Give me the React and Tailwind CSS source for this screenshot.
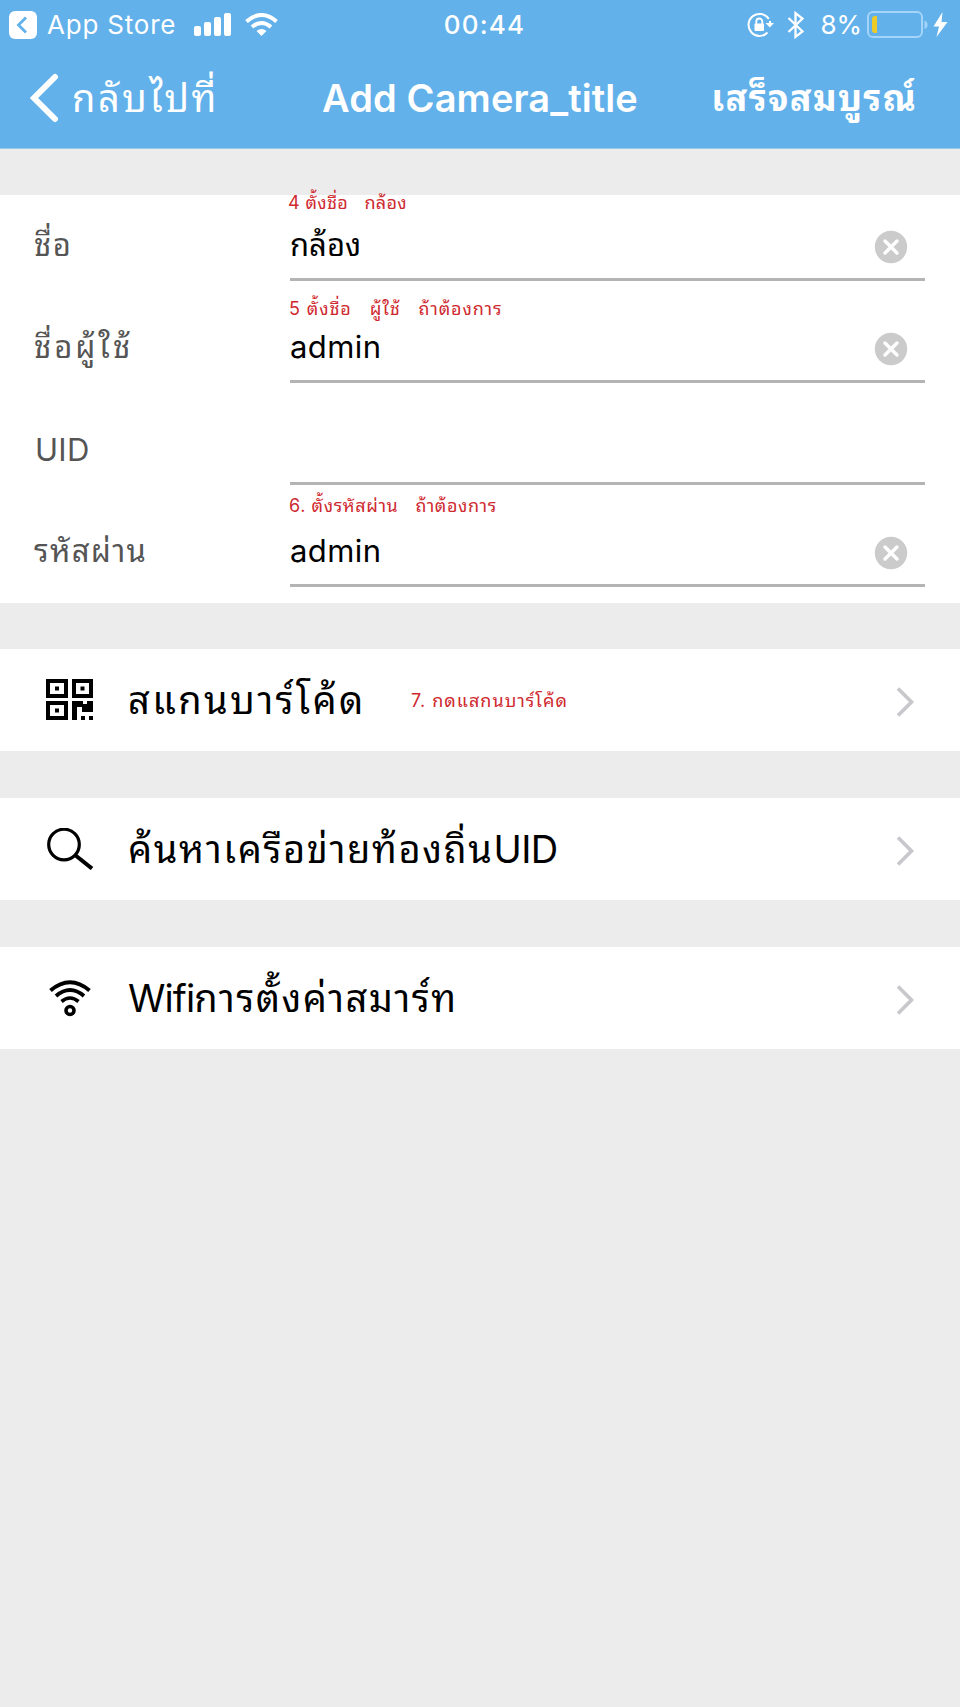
import React from "react";

const fields = [
  { label: "ชื่อ", labelClass: "-ml-px tracking-[1.5px]", value: "กล้อง", clear: true, note: "4 ตั้งชื่อ   กล้อง", noteClass: "left-[288px] -top-[6px] tracking-[0.35px]" },
  { label: "ชื่อผู้ใช้", labelClass: "-ml-px tracking-[3px]", value: "admin", clear: true, note: "5 ตั้งชื่อ   ผู้ใช้   ถ้าต้องการ", noteClass: "left-[289px] -top-[2px] tracking-[0.9px]" },
  { label: "UID", labelClass: "mt-px tracking-[0.3px]", value: "", clear: false },
  { label: "รหัสผ่าน", labelClass: "-ml-px tracking-[1.3px]", value: "admin", clear: true, note: "6. ตั้งรหัสผ่าน   ถ้าต้องการ", noteClass: "left-[289px] -top-[9px] tracking-[0.6px]" },
];

const ClearIcon = () => (
  <svg width="34" height="34" viewBox="0 0 34 34">
    <circle cx="17" cy="17" r="16.2" fill="#cbcbcb" />
    <path d="M11 11l12 12M23 11L11 23" stroke="#fff" strokeWidth="3.4" strokeLinecap="round" />
  </svg>
);

const Chevron = () => (
  <svg className="mt-[4px]" width="20" height="32" viewBox="0 0 20 32" fill="none">
    <path d="M2 2.5L15.500 16L2 29.500" stroke="#c7c7cc" strokeWidth="3.600" />
  </svg>
);

const QrIcon = () => (
  <svg width="48" height="42" viewBox="0 0 48 42" fill="#000">
    <path fillRule="evenodd" d="M0 0h22v19H0zM4 4v11h14V4zM9 7.5h4v4H9z" />
    <path fillRule="evenodd" d="M26 0h21v19H26zM30 4v11h13V4zM34.500 7.500h4v4h-4z" />
    <path fillRule="evenodd" d="M0 22h22v19H0zM4 26v11h14V26zM9 29.500h4v4H9z" />
    <path d="M26 22h11v3h4v-3h6v11H36v-5h-5v13h-5zM35 37h4v4h-4zM43 37h4v4h-4z" />
  </svg>
);

const SearchIcon = () => (
  <svg width="48" height="42" viewBox="0 0 48 42" fill="none" stroke="#000">
    <circle cx="18" cy="16.500" r="15.300" strokeWidth="3.200" />
    <path d="M29 27L46 40.500" strokeWidth="4" />
  </svg>
);

const WifiIcon = () => (
  <svg width="48" height="42" viewBox="0 0 48 42" fill="none" stroke="#000">
    <path d="M4.500 13.500Q24 -3 43.500 13.500" strokeWidth="4" />
    <path d="M10 19Q24 7 38 19" strokeWidth="3.800" />
    <path d="M15.500 24.500Q24 17.500 32.500 24.500" strokeWidth="3.600" />
    <circle cx="24" cy="33.500" r="4" strokeWidth="3.600" />
  </svg>
);

const actions = [
  { id: "scan", title: <span className="tracking-[2.4px]">สแกนบาร์โค้ด</span>, icon: QrIcon, note: "7. กดแสกนบาร์โค้ด" },
  { id: "search", title: <><span className="tracking-[1.6px]">ค้นหาเครือข่ายท้องถิ่น</span><span className="tracking-[-0.6px]">UID</span></>, icon: SearchIcon },
  { id: "wifi", title: <><span className="tracking-[-0.9px]">Wifi</span><span className="tracking-[1.5px]">การตั้งค่าสมาร์ท</span></>, icon: WifiIcon },
];

const StatusBar = () => (
  <div className="grid grid-cols-[1fr_auto_1fr] items-center h-[49px] text-[26px]">
    <div className="flex items-center pl-[9px]">
      <svg width="28" height="28" viewBox="0 0 28 28">
        <rect width="28" height="28" rx="6" fill="#fff" />
        <path d="M17 6.500L9.500 14L17 21.500" fill="none" stroke="#62b1ea" strokeWidth="2.800" />
      </svg>
      <span className="ml-[10px] tracking-[0.8px]">App Store</span>
      <svg className="ml-[18px]" width="38" height="24" viewBox="0 0 38 24" fill="#fff">
        <rect x="0" y="13" width="7" height="10" rx="2" />
        <rect x="10" y="9" width="7" height="14" rx="2" />
        <rect x="20" y="4" width="7" height="19" rx="2" />
        <rect x="30" y="0" width="7" height="23" rx="2" />
      </svg>
      <svg className="ml-[13px]" width="33" height="24" viewBox="0 0 33 24" fill="none" stroke="#fff">
        <path d="M1.500 8.500Q16.500 -4.500 31.500 8.500" strokeWidth="4" />
        <path d="M7 14Q16.500 6 26 14" strokeWidth="4" />
        <path d="M11.500 18Q16.500 14 21.500 18L16.500 23z" fill="#fff" stroke="none" />
      </svg>
    </div>
    <span className="pl-[9px] font-medium tracking-[1.2px]">00:44</span>
    <div className="flex items-center justify-end pr-[12px]">
      <svg width="27" height="26" viewBox="0 0 27 26" fill="none" stroke="#fff">
        <path d="M21.800 7A11 11 0 1 0 20.500 20.500M23 9V12" strokeWidth="2" />
        <path d="M18.500 11h8.500l-4.200 4.500z" fill="#fff" stroke="none" />
        <rect x="7.500" y="11.500" width="9.500" height="7.500" rx="1" fill="#fff" stroke="none" />
        <path d="M9.300 12V9.500a3 3 0 0 1 6 0V12" strokeWidth="1.800" />
      </svg>
      <svg className="ml-[13px]" width="18" height="30" viewBox="0 0 18 30" fill="none">
        <path d="M1.500 8L15.500 21.500L8.500 27V3L15.500 8.500L1.500 22" stroke="#fff" strokeWidth="2.300" />
      </svg>
      <span className="ml-[15px]">8%</span>
      <svg className="ml-[5px]" width="62" height="28" viewBox="0 0 62 28">
        <rect x="1" y="1" width="54" height="25" rx="5" fill="none" stroke="#a4d4f7" strokeWidth="2" />
        <path d="M57.500 9.500q3 1 3 4.300t-3 4.300z" fill="#a4d4f7" />
        <path d="M10 5H8q-3 0-3 3v11q0 3 3 3h2z" fill="#edca28" />
      </svg>
      <svg className="ml-[4px]" width="15" height="26" viewBox="0 0 15 26">
        <path d="M9.500 0L0.500 14.500H6L3.500 25L14.500 10H8.500z" fill="#fff" />
      </svg>
    </div>
  </div>
);

const NavBar = () => (
  <div className="grid grid-cols-[1fr_auto_1fr] items-center h-[98px]">
    <div className="flex items-center pl-[29px]">
      <svg width="30" height="50" viewBox="0 0 30 50" fill="none">
        <path d="M26 4L5 25L26 46" stroke="#fff" strokeWidth="6" strokeLinecap="round" />
      </svg>
      <span className="ml-[13px] text-[38px] tracking-[2.5px]">กลับไปที่</span>
    </div>
    <span className="text-[38px] font-semibold tracking-[0.1px]">Add Camera_title</span>
    <span className="pr-[43px] text-right text-[36px] font-bold tracking-[1.3px]">เสร็จสมบูรณ์</span>
  </div>
);

const Note = ({ className, children }) => (
  <span className={`absolute whitespace-pre text-[18px] leading-[28px] text-[#cf2a30] ${className}`}>{children}</span>
);

const App = () => {
  return (
    <div className="w-[960px] h-[1707px] overflow-hidden bg-[#ececec] text-black font-['Inter','Noto_Sans_Thai_Looped','Loma','Garuda','Waree','Umpush','Noto_Sans_Thai',sans-serif]">
      <header className="h-[149px] bg-[#62b1ea] border-b border-[#9cc9ea] text-white">
        <StatusBar />
        <NavBar />
      </header>

      {/* Camera form */}
      <section className="mt-[46px] bg-white">
        {fields.map((f) => (
          <div key={f.label} className="relative flex h-[102px] pl-[35px] pr-[35px] text-[31px]">
            <div className="w-[255px] pt-[28px] leading-[44px] text-[#555]">
              <label className={`block ${f.labelClass}`}>{f.label}</label>
            </div>
            <div className="flex flex-1 justify-between h-[86px] pt-[28px] pr-[17px] leading-[44px] border-b-[3px] border-[#b4b4b4]">
              <span className={f.value === "admin" ? "tracking-[0.4px]" : ""}>{f.value}</span>
              {f.clear && <div className="pt-[7px]"><ClearIcon /></div>}
            </div>
            {f.note && <Note className={f.noteClass}>{f.note}</Note>}
          </div>
        ))}
      </section>

      {/* Actions */}
      <section className="mt-[46px] flex flex-col gap-[47px]">
        {actions.map((a) => (
          <div key={a.id} className="relative flex items-center h-[102px] pl-[46px] pr-[44px] bg-white">
            <a.icon />
            <span className="ml-[34px] flex-1 text-[38px]">{a.title}</span>
            <Chevron />
            {a.note && <Note className="left-[411px] top-[38px] tracking-[1px]">{a.note}</Note>}
          </div>
        ))}
      </section>
    </div>
  );
};

export default App;
